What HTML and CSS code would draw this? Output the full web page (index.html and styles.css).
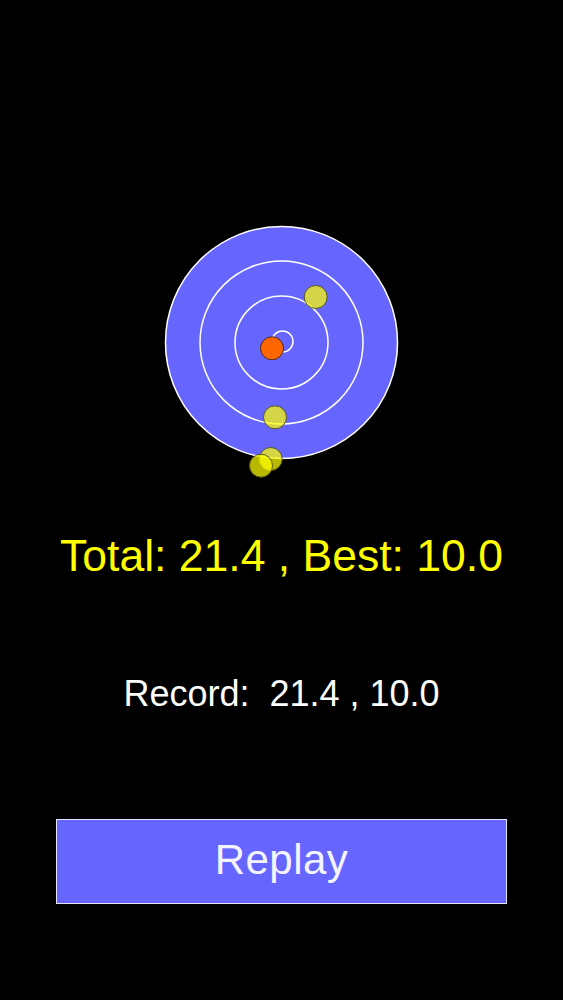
FILE: index.html
```html
<!DOCTYPE html>
<html>
<head>
<meta charset="utf-8">
<link rel="stylesheet" href="styles.css">
</head>
<body>
<main class="screen">
  <svg class="target" width="563" height="490" viewBox="0 0 563 490">
    <circle cx="281.5" cy="342.5" r="116" fill="#6666ff" stroke="#ffffff" stroke-width="1.5"/>
    <circle cx="281.5" cy="342.5" r="81.5" fill="none" stroke="#ffffff" stroke-width="1.5"/>
    <circle cx="281.5" cy="342.5" r="46.5" fill="none" stroke="#ffffff" stroke-width="1.5"/>
    <circle cx="282.5" cy="341.5" r="10.5" fill="none" stroke="#ffffff" stroke-width="1.5"/>
    <circle cx="272" cy="348.3" r="11.5" fill="#ff6600" stroke="#4a2a10" stroke-width="1"/>
    <circle class="shot" cx="315.7" cy="297" r="11.5"/>
    <circle class="shot" cx="275" cy="417.3" r="11.5"/>
    <circle class="shot" cx="270.7" cy="459" r="11.5"/>
    <circle class="shot" cx="261" cy="465.7" r="11.5"/>
  </svg>
  <div class="total">Total: 21.4 , Best: 10.0</div>
  <div class="record">Record:  21.4 , 10.0</div>
  <div class="replay"><span class="replay-label">Replay</span></div>
</main>
</body>
</html>
```
FILE: styles.css
```css
html, body {
  margin: 0;
  padding: 0;
  background: #000000;
}
.screen {
  width: 563px;
  height: 1000px;
  display: flex;
  flex-direction: column;
  align-items: center;
  font-family: "Liberation Sans", Arial, sans-serif;
}
.target {
  display: block;
  flex: none;
}
.shot {
  fill: #ffff00;
  fill-opacity: 0.72;
  stroke: #555522;
  stroke-width: 1;
}
.total {
  margin-top: 40px;
  font-size: 44.5px;
  line-height: 52px;
  color: #ffff00;
  white-space: pre;
}
.record {
  margin-top: 92px;
  font-size: 36px;
  line-height: 40px;
  color: #ffffff;
  white-space: pre;
}
.replay {
  margin-top: 104.8px;
  box-sizing: border-box;
  width: 451px;
  height: 85px;
  border: 1.5px solid #e6e6ff;
  background: #6666ff;
  color: #f4f4ff;
  font-size: 42px;
  line-height: 1;
  display: flex;
  align-items: center;
  justify-content: center;
  padding-bottom: 2px;
}
.replay-label {
  letter-spacing: 0.5px;
}
```
